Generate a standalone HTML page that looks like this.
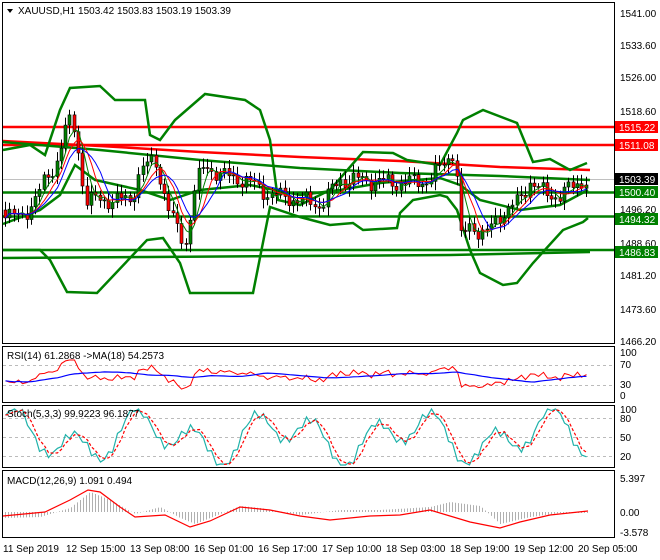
<!DOCTYPE html>
<html><head><meta charset="utf-8"><style>
body{margin:0;background:#fff;}
svg{display:block;font-family:"Liberation Sans",sans-serif;font-size:10px;}
</style></head><body>
<svg id="s" width="660" height="560" xmlns="http://www.w3.org/2000/svg">
<rect x="0" y="0" width="660" height="560" fill="#fff"/>
<rect x="2.5" y="2.5" width="612" height="341" fill="none" stroke="#000"/>
<rect x="2.5" y="346.5" width="612" height="56" fill="none" stroke="#000"/>
<rect x="2.5" y="405.5" width="612" height="62" fill="none" stroke="#000"/>
<rect x="2.5" y="470.5" width="612" height="67" fill="none" stroke="#000"/>
<g id="g"></g>
<g fill="#000">
<path d="M7 9 L13 9 L10 13 Z"/>
<text x="18" y="14">XAUUSD,H1  1503.42 1503.83 1503.19 1503.39</text>
<text x="7" y="359">RSI(14) 61.2868  -&gt;MA(18) 54.2573</text>
<text x="7" y="417">Stoch(5,3,3) 99.9223 96.1877</text>
<text x="7" y="484">MACD(12,26,9) 1.091 0.494</text>
</g>
<g font-size="10" fill="#000">
<text x="620" y="17">1541.00</text><text x="620" y="49">1533.60</text><text x="620" y="81">1526.00</text>
<text x="620" y="115">1518.60</text><text x="620" y="213">1496.20</text><text x="620" y="247">1488.60</text>
<text x="620" y="279">1481.20</text><text x="620" y="313">1473.60</text><text x="620" y="345">1466.20</text>
<text x="620" y="356">100</text><text x="620" y="368">70</text><text x="620" y="388">30</text><text x="620" y="399">0</text>
<text x="620" y="413">100</text><text x="620" y="422">80</text><text x="620" y="441">50</text><text x="620" y="460">20</text>
<text x="620" y="482">5.397</text><text x="620" y="516">0.00</text><text x="620" y="536">-3.578</text>
</g>
<g font-size="10">
<rect x="615" y="121" width="43" height="12" fill="#f00"/><text x="619" y="131" fill="#fff">1515.22</text>
<rect x="615" y="139" width="43" height="12" fill="#f00"/><text x="619" y="149" fill="#fff">1511.08</text>
<rect x="615" y="173" width="43" height="12" fill="#000"/><text x="619" y="183" fill="#fff">1503.39</text>
<rect x="615" y="186" width="43" height="12" fill="#008000"/><text x="619" y="196" fill="#fff">1500.40</text>
<rect x="615" y="213" width="43" height="12" fill="#008000"/><text x="619" y="223" fill="#fff">1494.32</text>
<rect x="615" y="246" width="43" height="12" fill="#008000"/><text x="619" y="256" fill="#fff">1486.83</text>
</g>
<g font-size="10" fill="#000">
<text x="3" y="552">11 Sep 2019</text><text x="66" y="552">12 Sep 15:00</text><text x="130" y="552">13 Sep 08:00</text>
<text x="194" y="552">16 Sep 01:00</text><text x="258" y="552">16 Sep 17:00</text><text x="322" y="552">17 Sep 10:00</text>
<text x="386" y="552">18 Sep 03:00</text><text x="450" y="552">18 Sep 19:00</text><text x="514" y="552">19 Sep 12:00</text>
<text x="578" y="552">20 Sep 05:00</text>
</g>
</svg>
<script>
(function(){
var g=document.getElementById('g'),h='';
function f(n){return (+n).toFixed(1);}
function pl(pts,c,w,extra){h+='<polyline fill="none" stroke="'+c+'" stroke-width="'+w+'" '+(extra||'')+' points="'+pts.map(function(p){return f(p[0])+','+f(p[1])}).join(' ')+'"/>';}
function ln(x1,y1,x2,y2,c,w,e){h+='<line x1="'+f(x1)+'" y1="'+f(y1)+'" x2="'+f(x2)+'" y2="'+f(y2)+'" stroke="'+c+'" stroke-width="'+w+'" '+(e||'')+'/>';}
function interp(k,x){for(var i=0;i<k.length-1;i++){if(x<=k[i+1][0]){var t=(x-k[i][0])/(k[i+1][0]-k[i][0]);return k[i][1]+t*(k[i+1][1]-k[i][1]);}}return k[k.length-1][1];}
ln(3,179.5,614,179.5,'#c0c0c0',1);
ln(3,127,614,127,'#f00',2.5);ln(3,145,614,145,'#f00',2.5);
ln(3,192.5,614,192.5,'#008000',2.5);ln(3,216.5,614,216.5,'#008000',2.5);ln(3,250,614,250,'#008000',2.5);
pl([[3,141],[100,146],[200,152],[300,157],[400,161],[500,167],[590,170]],'#f00',2.5);
pl([[3,142],[100,150],[200,160],[300,168],[400,173],[500,176],[590,180]],'#008000',2.5);
pl([[3,258],[150,257],[300,256],[450,255],[590,252]],'#008000',2.5);
var up=[[3,150],[30,145],[45,155],[60,110],[70,88],[100,86],[115,100],[145,100],[150,135],[160,140],[175,120],[205,94],[245,100],[260,110],[270,140],[278,200],[300,205],[330,190],[363,152],[393,153],[407,160],[440,165],[457,133],[463,120],[483,110],[517,123],[533,162],[550,159],[570,170],[587,163]];
var lo=[[3,250],[40,250],[50,260],[67,292],[97,293],[147,240],[163,238],[180,263],[190,293],[253,293],[270,207],[300,217],[330,225],[353,223],[363,230],[397,228],[400,213],[413,200],[440,195],[447,197],[457,210],[470,250],[480,273],[503,285],[517,283],[533,263],[563,230],[583,222],[588,218]];
pl(up,'#008000',2.5);pl(lo,'#008000',2.5);
var mid=[[3,224],[40,210],[60,195],[75,165],[95,180],[140,190],[170,200],[200,190],[250,185],[300,195],[340,190],[380,183],[440,178],[460,185],[480,200],[520,210],[560,205],[588,190]];
pl(mid,'#008000',2.5);
var pk=[[3,210],[20,220],[40,190],[55,165],[65,130],[72,120],[78,150],[85,200],[100,200],[130,200],[140,170],[155,160],[170,215],[185,245],[195,185],[205,165],[220,175],[245,180],[270,195],[300,200],[320,205],[340,180],[360,180],[400,183],[430,180],[445,160],[455,150],[460,240],[470,225],[485,235],[500,215],[520,200],[530,180],[545,195],[560,195],[575,185],[588,178]];
var prev=210,cl=[];
for(var x=5;x<=589;x+=4.3){var c=interp(pk,x)+Math.sin(x*1.7)*6+Math.sin(x*0.53)*4;var o=prev;var hi=Math.min(o,c)-3-Math.abs(Math.sin(x*2.3))*6,lw=Math.max(o,c)+3+Math.abs(Math.cos(x*1.9))*6;
var xx=Math.round(x)+0.5;ln(xx,hi,xx,lw,'#000',1);var col=c<o?'#008000':'#f00';h+='<rect x="'+f(xx-1.5)+'" y="'+f(Math.min(o,c))+'" width="3" height="'+f(Math.max(1,Math.abs(c-o)))+'" fill="'+col+'" stroke="#000" stroke-width="0.6"/>';prev=c;cl.push([xx,c]);}
function sm(a,n,off){var r=[];for(var i=0;i<a.length;i++){var s=0,k=0;for(var j=Math.max(0,i-n+1);j<=i;j++){s+=a[j][1];k++;}r.push([a[i][0],s/k+(off||0)]);}return r;}
pl(sm(cl,4),'#008000',1);pl(sm(cl,6),'#f00',1);pl(sm(cl,8),'#00f',1);
ln(3,365.5,614,365.5,'#bbb',1,'stroke-dasharray="3,3"');ln(3,385.5,614,385.5,'#bbb',1,'stroke-dasharray="3,3"');
var r=[];for(var i=0;i<cl.length;i++){var x2=cl[i][0];r.push([x2,Math.max(360,Math.min(392,377+(cl[i][1]-195)*0.25+Math.sin(x2*0.9)*2))]);}
pl(r,'#f00',1);pl(sm(r,18),'#00f',1.2);
[418.5,437.5,456.5].forEach(function(y){ln(3,y,614,y,'#bbb',1,'stroke-dasharray="3,3"');});
var st=[];for(var i=0;i<cl.length;i++){var x3=cl[i][0];var v=Math.sin(x3*0.105)*0.6+Math.sin(x3*0.047+1)*0.5+Math.sin(x3*0.6)*0.15;v=Math.max(-1,Math.min(1,v));st.push([x3,437-v*28]);}
var sd=st.map(function(p,i){return [p[0],(st[Math.max(0,i-1)][1]+st[Math.max(0,i-2)][1]+p[1])/3];});
pl(st,'#20b2aa',1.2);pl(sd,'#f00',1.2,'stroke-dasharray="3,2"');
var mk=[[3,6],[40,5],[70,-4],[90,-20],[110,-12],[135,2],[160,-5],[180,6],[195,12],[220,2],[240,-6],[260,-4],[300,3],[340,-2],[380,-2],[430,-5],[450,-10],[480,-6],[500,12],[530,5],[560,1],[588,1]];
for(var x4=5;x4<=589;x4+=3){var v2=interp(mk,x4);ln(x4+0.5,512,x4+0.5,512+v2,'#b0b0b0',1);}
var sg=[[3,516],[45,512],[70,500],[88,490],[100,492],[120,507],[135,517],[165,515],[190,527],[210,521],[240,507],[270,510],[300,516],[330,520],[370,516],[400,515],[430,510],[470,522],[500,528],[520,522],[550,515],[588,511]];
pl(sg,'#f00',1.2);
g.innerHTML=h;
})();
</script>
</body></html>
